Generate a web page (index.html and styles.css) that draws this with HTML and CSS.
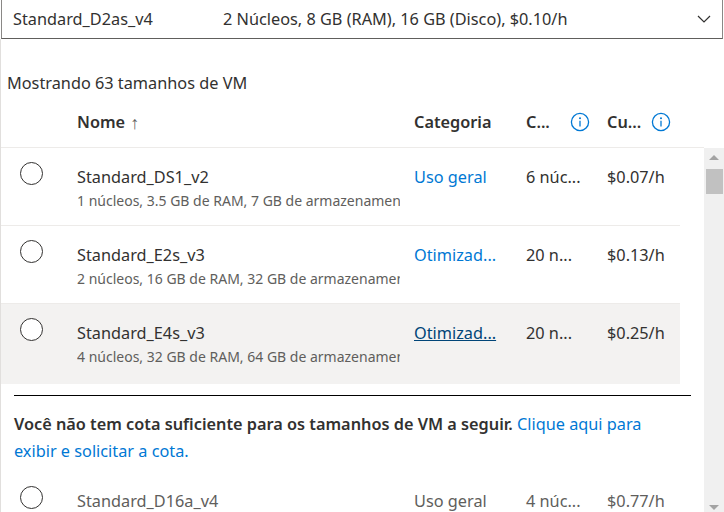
FILE: index.html
```html
<!DOCTYPE html>
<html lang="pt">
<head>
<meta charset="utf-8">
<link rel="stylesheet" href="styles.css">
</head>
<body>
<div class="dropdown">
  <span class="dd-name">Standard_D2as_v4</span>
  <span class="dd-desc">2 Núcleos, 8 GB (RAM), 16 GB (Disco), $0.10/h</span>
  <svg class="chevron" width="14" height="8" viewBox="0 0 14 8"><path d="M1 1 L7 7 L13 1" fill="none" stroke="#323130" stroke-width="1.2"/></svg>
</div>
<div class="panel">
  <div class="count">Mostrando 63 tamanhos de VM</div>
  <div class="thead">
    <div class="cell-radio"></div>
    <div class="th">Nome <span class="arrow">↑</span></div>
    <div class="th">Categoria</div>
    <div class="th th-info"><span>C...</span><svg class="info" width="20" height="20" viewBox="0 0 20 20"><circle cx="10" cy="10" r="8.6" fill="none" stroke="#0078d4" stroke-width="1.3"/><circle cx="10" cy="6.2" r="1" fill="#0078d4"/><path d="M10 8.8 V14.6" stroke="#0078d4" stroke-width="1.3"/></svg></div>
    <div class="th th-info"><span>Cu...</span><svg class="info" width="20" height="20" viewBox="0 0 20 20"><circle cx="10" cy="10" r="8.6" fill="none" stroke="#0078d4" stroke-width="1.3"/><circle cx="10" cy="6.2" r="1" fill="#0078d4"/><path d="M10 8.8 V14.6" stroke="#0078d4" stroke-width="1.3"/></svg></div>
  </div>
  <div class="body-wrap">
    <div class="rows">
      <div class="row">
        <div class="cell-radio"><span class="radio"></span></div>
        <div class="name-cell"><div class="name">Standard_DS1_v2</div><div class="sub">1 núcleos, 3.5 GB de RAM, 7 GB de armazenamento temporário</div></div>
        <div class="cell"><a class="link">Uso geral</a></div>
        <div class="cell">6 núc...</div>
        <div class="cell">$0.07/h</div>
      </div>
      <div class="row">
        <div class="cell-radio"><span class="radio"></span></div>
        <div class="name-cell"><div class="name">Standard_E2s_v3</div><div class="sub">2 núcleos, 16 GB de RAM, 32 GB de armazenamento temporário</div></div>
        <div class="cell"><a class="link">Otimizad...</a></div>
        <div class="cell">20 n...</div>
        <div class="cell">$0.13/h</div>
      </div>
      <div class="row hover">
        <div class="cell-radio"><span class="radio"></span></div>
        <div class="name-cell"><div class="name">Standard_E4s_v3</div><div class="sub">4 núcleos, 32 GB de RAM, 64 GB de armazenamento temporário</div></div>
        <div class="cell"><a class="link link-hover">Otimizad...</a></div>
        <div class="cell">20 n...</div>
        <div class="cell">$0.25/h</div>
      </div>
      <hr class="divider">
      <p class="quota"><strong>Você não tem cota suficiente para os tamanhos de VM a seguir.</strong> <a class="link">Clique aqui para<br>exibir e solicitar a cota.</a></p>
      <div class="row disabled">
        <div class="cell-radio"><span class="radio"></span></div>
        <div class="name-cell"><div class="name">Standard_D16a_v4</div><div class="sub">16 núcleos, 64 GB de RAM, 128 GB de armazenamento temporário</div></div>
        <div class="cell">Uso geral</div>
        <div class="cell">4 núc...</div>
        <div class="cell">$0.77/h</div>
      </div>
    </div>
    <div class="scrollbar">
      <span class="sb-up"></span>
      <span class="sb-thumb"></span>
      <span class="sb-space"></span>
      <span class="sb-down"></span>
    </div>
  </div>
</div>
</body>
</html>
```
FILE: styles.css
```css
* { box-sizing: border-box; }
html, body { margin: 0; padding: 0; background: #fff; }
body {
  font-family: "Segoe UI", "Noto Sans", "Liberation Sans", sans-serif;
  font-size: 16.3px;
  color: #323130;
  width: 724px;
  height: 512px;
  overflow: hidden;
}
.dropdown {
  margin-left: 1px;
  margin-right: 1px;
  height: 39px;
  border-left: 1px solid #8a8886;
  border-right: 1px solid #8a8886;
  border-bottom: 1px solid #605e5c;
  display: flex;
  align-items: center;
  padding: 0 0 0 11px;
  white-space: nowrap;
}
.dd-name { width: 210px; }
.dd-desc { flex: 1; }
.chevron { margin-right: 11px; }
.panel {
  border-left: 1px solid #e1dfdd;
  height: 473px;
  display: flex;
  flex-direction: column;
}
.count {
  padding: 33px 0 0 6px;
  line-height: 22px;
  height: 56px;
}
.thead {
  display: grid;
  grid-template-columns: 76px 337px 112px 81px 96px;
  height: 53px;
  align-items: center;
  border-bottom: 1px solid #edebe9;
  margin-right: 20px;
  padding-top: 2px;
}
.th { font-weight: 600; display: flex; align-items: center; }
.arrow { font-weight: 400; margin-left: 5px; color: #605e5c; font-size: 18px; }
.th-info span { width: 44px; }
.info { display: block; }
.body-wrap {
  flex: 1;
  display: flex;
  min-height: 0;
}
.rows { flex: 1; overflow: hidden; }
.row {
  display: grid;
  grid-template-columns: 76px 337px 112px 81px 73px;
  height: 78px;
  width: 679px;
  border-bottom: 1px solid #edebe9;
  padding-top: 18px;
  align-items: start;
}
.row.hover { background: #f3f2f1; border-bottom-color: transparent; height: 80px; }
.cell-radio { padding-left: 19px; }
.radio {
  display: block;
  width: 23px;
  height: 23px;
  border: 1.5px solid #323130;
  border-radius: 50%;
  background: #fff;
  margin-top: -4px;
}
.name-cell { white-space: nowrap; }
.name { line-height: 22px; }
.sub {
  font-size: 14px;
  color: #605e5c;
  line-height: 24px;
  margin-top: 1px;
  width: 323px;
  overflow: hidden;
}
.cell { line-height: 22px; white-space: nowrap; }
.link { color: #0078d4; text-decoration: none; }
.link-hover { color: #004578; text-decoration: underline; }
.divider {
  border: none;
  border-top: 1px solid #000;
  margin: 11px 13px 0 13px;
  height: 0;
}
.quota {
  margin: 0;
  padding: 15px 13px 0 13px;
  line-height: 27px;
  height: 76px;
}
.quota strong { font-weight: 600; }
.row.disabled { color: #605e5c; border-bottom: none; }
.scrollbar {
  width: 20px;
  background: #f0f0f0;
  display: flex;
  flex-direction: column;
  align-items: center;
}
.sb-up {
  margin-top: 7px;
  width: 0; height: 0;
  border-left: 5px solid transparent;
  border-right: 5px solid transparent;
  border-bottom: 5px solid #a3a3a3;
}
.sb-thumb {
  margin-top: 9px;
  width: 17px;
  height: 25px;
  background: #c1c1c1;
}
.sb-space { flex: 1; }
.sb-down {
  margin-bottom: 2px;
  width: 0; height: 0;
  border-left: 5px solid transparent;
  border-right: 5px solid transparent;
  border-top: 5px solid #a3a3a3;
}
```
